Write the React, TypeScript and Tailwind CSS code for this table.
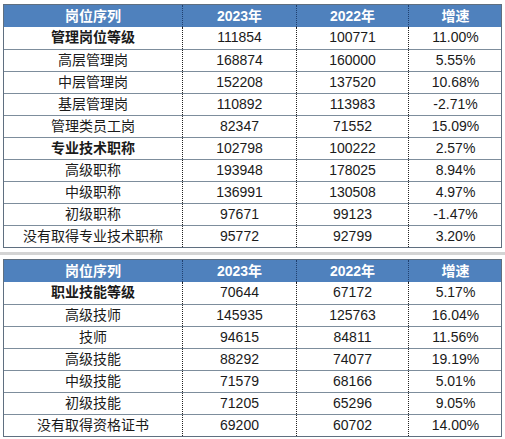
import React from 'react';

type Row = { name: string; y23: string; y22: string; rate: string; bold?: boolean };

const table1: Row[] = [
  { name: '管理岗位等级', y23: '111854', y22: '100771', rate: '11.00%', bold: true },
  { name: '高层管理岗', y23: '168874', y22: '160000', rate: '5.55%' },
  { name: '中层管理岗', y23: '152208', y22: '137520', rate: '10.68%' },
  { name: '基层管理岗', y23: '110892', y22: '113983', rate: '-2.71%' },
  { name: '管理类员工岗', y23: '82347', y22: '71552', rate: '15.09%' },
  { name: '专业技术职称', y23: '102798', y22: '100222', rate: '2.57%', bold: true },
  { name: '高级职称', y23: '193948', y22: '178025', rate: '8.94%' },
  { name: '中级职称', y23: '136991', y22: '130508', rate: '4.97%' },
  { name: '初级职称', y23: '97671', y22: '99123', rate: '-1.47%' },
  { name: '没有取得专业技术职称', y23: '95772', y22: '92799', rate: '3.20%' },
];

const table2: Row[] = [
  { name: '职业技能等级', y23: '70644', y22: '67172', rate: '5.17%', bold: true },
  { name: '高级技师', y23: '145935', y22: '125763', rate: '16.04%' },
  { name: '技师', y23: '94615', y22: '84811', rate: '11.56%' },
  { name: '高级技能', y23: '88292', y22: '74077', rate: '19.19%' },
  { name: '中级技能', y23: '71579', y22: '68166', rate: '5.01%' },
  { name: '初级技能', y23: '71205', y22: '65296', rate: '9.05%' },
  { name: '没有取得资格证书', y23: '69200', y22: '60702', rate: '14.00%' },
];

const cols = 'grid grid-cols-[178px_114px_112px_94px]';

function DataTable({ rows }: { rows: Row[] }) {
  return (
    <div className="w-[499px] border border-[#5f6f80]">
      <div className={`${cols} h-[22px] bg-[#4f81bd] text-white font-bold text-[14px] leading-[22px]`}>
        <div className="text-center">岗位序列</div>
        <div className="text-center border-l border-dotted border-[#1f3f6f]">2023年</div>
        <div className="text-center border-l border-dotted border-[#1f3f6f]">2022年</div>
        <div className="text-center border-l border-dotted border-[#1f3f6f]">增速</div>
      </div>
      {rows.map((r, i) => (
        <div
          key={i}
          className={`${cols} h-[22px] text-[14px] leading-[21px] text-[#1a1a1a] ${i > 0 ? 'border-t border-[#7d8d9c]' : ''}`}
        >
          <div className={`text-center ${r.bold ? 'font-bold' : ''}`}>{r.name}</div>
          <div className="text-center border-l border-dotted border-[#222]">{r.y23}</div>
          <div className="text-center border-l border-dotted border-[#222]">{r.y22}</div>
          <div className="text-center border-l border-dotted border-[#222]">{r.rate}</div>
        </div>
      ))}
    </div>
  );
}

export default function App() {
  return (
    <div
      className="w-[505px] h-[439px] bg-white pl-[3px] pt-[4px]"
      style={{ fontFamily: '"Liberation Sans", "Noto Sans CJK SC", sans-serif' }}
    >
      <DataTable rows={table1} />
      <div className="h-[3px] bg-[#d4d4d4] mt-[4px] mb-[4px] -ml-[3px] w-[505px]" />
      <DataTable rows={table2} />
    </div>
  );
}
